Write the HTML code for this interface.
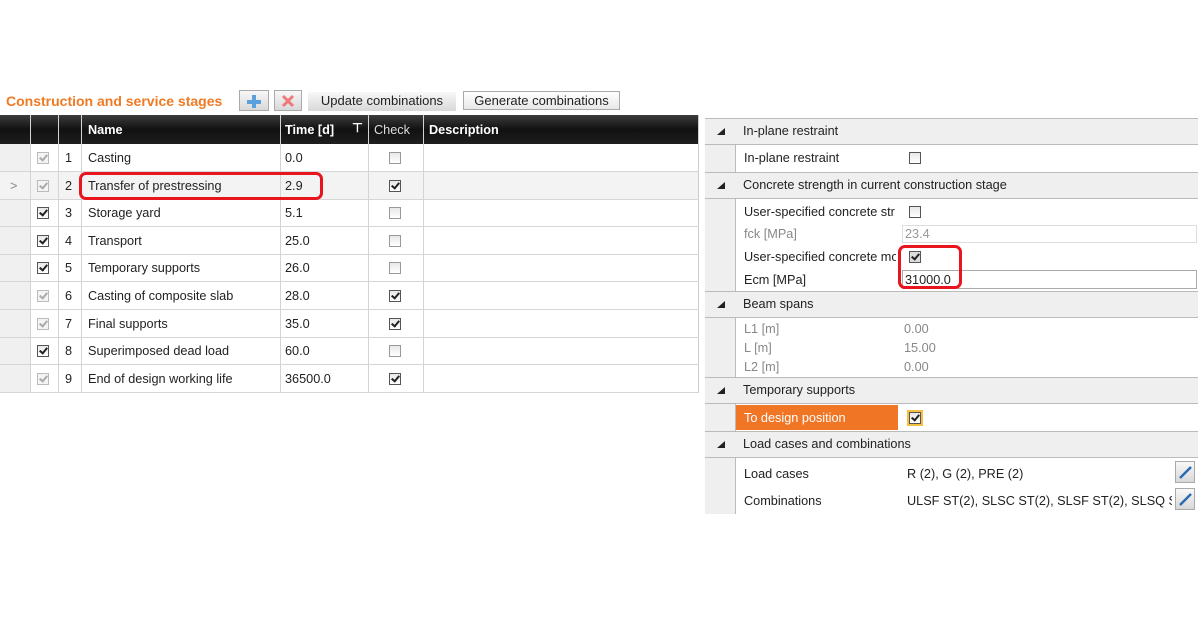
<!DOCTYPE html><html><head><style>
body{margin:0;width:1200px;height:630px;background:#fff;font-family:"Liberation Sans",sans-serif;font-size:12.7px;color:#222;position:relative;overflow:hidden}
.a{position:absolute}
.t{position:absolute;white-space:nowrap;line-height:16px}
.cb{position:absolute;width:12px;height:12px;border:1px solid #555;background:linear-gradient(#e8e8e8,#fff);box-sizing:border-box}
.cb.g{border-color:#bbb;background:#f4f4f4}
.ck:after{content:"";position:absolute;left:3px;top:0px;width:3px;height:6px;border:solid #222;border-width:0 2px 2px 0;transform:rotate(40deg)}
.cb.g.ck:after{border-color:#aaa}
.btn{position:absolute;height:19px;border:1px solid #aaa;background:linear-gradient(#f8f8f8,#d8d8d8);box-sizing:border-box;font-size:13px;text-align:center;line-height:17px}
.sh{position:absolute;left:705px;width:493px;height:27px;background:#efefef;border-top:1px solid #bbb;border-bottom:1px solid #bbb;box-sizing:border-box}
.sh span{position:absolute;left:38px;top:5px}
.sh i{position:absolute;left:12px;top:9px;width:0;height:0;border-left:8px solid transparent;border-bottom:7px solid #222}
</style></head><body>
<div class="t" style="left:6px;top:93px;color:#f07a24;font-weight:bold;font-size:14px">Construction and service stages</div>
<div class="btn" style="left:239px;top:90px;width:30px;height:21px"><svg width="16" height="14" style="margin-top:3px"><path d="M6 1h4v5h5v4h-5v4H6v-4H1V6h5z" fill="#5aa0dc"/></svg></div>
<div class="btn" style="left:274px;top:90px;width:28px;height:21px"><svg width="14" height="14" style="margin-top:3px"><path d="M2 2L12 12M12 2L2 12" stroke="#f07a7a" stroke-width="3"/></svg></div>
<div class="btn" style="left:308px;top:92px;width:148px;border:none">Update combinations</div>
<div class="btn" style="left:463px;top:91px;width:157px;background:linear-gradient(#fff,#e8e8e8)">Generate combinations</div>
<div class="a" style="left:0;top:115px;width:699px;height:29px;background:linear-gradient(#3c3c3c,#111 50%,#1e1e1e)"></div>
<div class="t" style="left:88px;top:122px;color:#fff;font-weight:bold">Name</div>
<div class="t" style="left:285px;top:122px;color:#fff;font-weight:bold">Time [d]</div>
<div class="t" style="left:352px;top:120px;color:#fff;font-weight:bold">&#x22A4;</div>
<div class="t" style="left:374px;top:122px;color:#ddd">Check</div>
<div class="t" style="left:429px;top:122px;color:#fff;font-weight:bold">Description</div>
<div class="a" style="left:0;top:144px;width:30px;height:248px;background:#f0f0f0"></div>
<div class="a" style="left:0;top:172px;width:699px;height:27px;background:#f3f3f3"></div>
<div id="g"></div>
<script>
var rows=[["Casting","0.0",1,0],["Transfer of prestressing","2.9",1,1],["Storage yard","5.1",0,0],["Transport","25.0",0,0],["Temporary supports","26.0",0,0],["Casting of composite slab","28.0",1,1],["Final supports","35.0",1,1],["Superimposed dead load","60.0",0,0],["End of design working life","36500.0",1,1]];
var h="",cols=[30,58,81,280,368,423,698];
cols.forEach(function(x){h+='<div class="a" style="left:'+x+'px;top:115px;width:1px;height:277px;background:'+(x==698?'#ccc':'#d4d4d4')+'"></div>';});
rows.forEach(function(r,i){var y=144+i*27.6;
h+='<div class="a" style="left:0;top:'+(y+27)+'px;width:699px;height:1px;background:#d6d6d6"></div>';
h+='<div class="cb '+(r[2]?'g ck':'ck')+'" style="left:37px;top:'+(y+8)+'px"></div>';
h+='<div class="t" style="left:65px;top:'+(y+6)+'px">'+(i+1)+'</div>';
h+='<div class="t" style="left:88px;top:'+(y+6)+'px">'+r[0]+'</div>';
h+='<div class="t" style="left:285px;top:'+(y+6)+'px">'+r[1]+'</div>';
h+='<div class="cb '+(r[3]?'ck':'')+'" style="left:389px;top:'+(y+8)+'px;'+(r[3]?'':'border-color:#999')+'"></div>';});
document.getElementById('g').innerHTML=h;
</script>
<div class="t" style="left:10px;top:178px;color:#888">&gt;</div>
<div class="a" style="left:79px;top:172px;width:238px;height:22px;border:3px solid #e8141e;border-radius:7px"></div>
<div class="a" style="left:705px;top:118px;width:30px;height:396px;background:#efefef"></div>
<div class="a" style="left:735px;top:118px;width:1px;height:396px;background:#bbb"></div>
<div class="sh" style="top:118px"><i></i><span>In-plane restraint</span></div>
<div class="t" style="left:744px;top:150px">In-plane restraint</div>
<div class="cb" style="left:909px;top:152px"></div>
<div class="sh" style="top:172px"><i></i><span>Concrete strength in current construction stage</span></div>
<div class="t" style="left:744px;top:204px">User-specified concrete str</div>
<div class="cb" style="left:909px;top:206px"></div>
<div class="t" style="left:744px;top:226px;color:#888">fck [MPa]</div>
<div class="a" style="left:902px;top:225px;width:295px;height:18px;border:1px solid #ddd;box-sizing:border-box"></div>
<div class="t" style="left:905px;top:226px;color:#999">23.4</div>
<div class="t" style="left:744px;top:249px;width:152px;overflow:hidden">User-specified concrete mo</div>
<div class="cb ck" style="left:909px;top:251px;background:#ddd"></div>
<div class="t" style="left:744px;top:272px">Ecm [MPa]</div>
<div class="a" style="left:902px;top:270px;width:295px;height:19px;border:1px solid #aaa;box-sizing:border-box"></div>
<div class="t" style="left:905px;top:272px">31000.0</div>
<div class="a" style="left:898px;top:245px;width:58px;height:38px;border:3px solid #e8141e;border-radius:7px"></div>
<div class="sh" style="top:291px"><i></i><span>Beam spans</span></div>
<div class="t" style="left:744px;top:321px;color:#888">L1 [m]</div><div class="t" style="left:904px;top:321px;color:#888">0.00</div>
<div class="t" style="left:744px;top:340px;color:#888">L [m]</div><div class="t" style="left:904px;top:340px;color:#888">15.00</div>
<div class="t" style="left:744px;top:359px;color:#888">L2 [m]</div><div class="t" style="left:904px;top:359px;color:#888">0.00</div>
<div class="sh" style="top:377px"><i></i><span>Temporary supports</span></div>
<div class="a" style="left:736px;top:405px;width:162px;height:25px;background:#f07524"></div>
<div class="t" style="left:744px;top:410px;color:#fff">To design position</div>
<div class="cb ck" style="left:909px;top:412px;outline:2px solid #f5c040"></div>
<div class="sh" style="top:431px"><i></i><span>Load cases and combinations</span></div>
<div class="t" style="left:744px;top:466px">Load cases</div>
<div class="t" style="left:907px;top:466px">R (2), G (2), PRE (2)</div>
<div class="t" style="left:744px;top:493px">Combinations</div>
<div class="t" style="left:907px;top:493px;width:265px;overflow:hidden">ULSF ST(2), SLSC ST(2), SLSF ST(2), SLSQ ST(2)</div>
<div class="btn" style="left:1175px;top:461px;width:20px;height:22px"><svg width="16" height="16" style="margin-top:2px"><path d="M3 14L14 3" stroke="#2a6ab0" stroke-width="2.5"/></svg></div>
<div class="btn" style="left:1175px;top:488px;width:20px;height:22px"><svg width="16" height="16" style="margin-top:2px"><path d="M3 14L14 3" stroke="#2a6ab0" stroke-width="2.5"/></svg></div>
</body></html>
